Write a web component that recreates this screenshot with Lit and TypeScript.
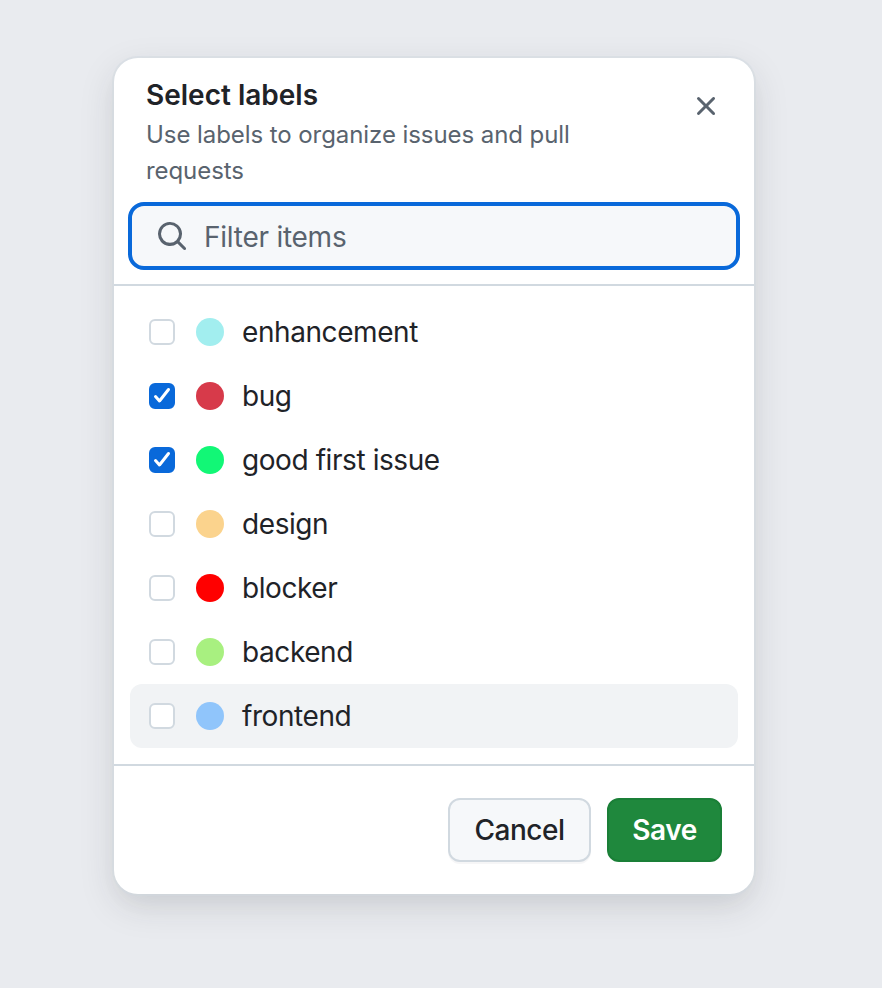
import { LitElement, html, css } from "lit";
import { customElement } from "lit/decorators.js";

const LABELS = [
  { name: "enhancement", color: "#a2eeef", checked: false, hover: false },
  { name: "bug", color: "#d73a4a", checked: true, hover: false },
  { name: "good first issue", color: "#12f776", checked: true, hover: false },
  { name: "design", color: "#fbd38d", checked: false, hover: false },
  { name: "blocker", color: "#ff0000", checked: false, hover: false },
  { name: "backend", color: "#a8f080", checked: false, hover: false },
  { name: "frontend", color: "#90c5fb", checked: false, hover: true },
];

@customElement("app-root")
export class AppRoot extends LitElement {
  static styles = css`
    :host {
      display: block;
      box-sizing: border-box;
      width: 882px;
      height: 988px;
      padding: 58px 0 0 114px;
      background: #e9ebef;
      font-family: Inter, "Noto Sans", sans-serif;
      color: #1f2328;
    }
    * { box-sizing: border-box; }
    .dialog {
      width: 640px;
      height: 836px;
      background: #fff;
      border-radius: 24px;
      box-shadow: 0 0 0 2px rgba(209, 217, 224, 0.5),
        0 12px 24px -6px rgba(37, 41, 46, 0.04),
        0 12px 36px 0 rgba(37, 41, 46, 0.13);
      display: flex;
      flex-direction: column;
    }
    .header {
      display: flex;
      justify-content: space-between;
      padding: 19px 32px 0;
    }
    .titles { width: 448px; }
    .title {
      font-size: 28px;
      font-weight: 600;
      line-height: 36px;
    }
    .sub {
      font-size: 24px;
      line-height: 36px;
      color: #59636e;
      margin-top: 4px;
      letter-spacing: -0.07px;
    }
    .close {
      flex: none;
      width: 32px;
      height: 32px;
      margin-top: 13px;
      color: #59636e;
      display: block;
    }
    .close svg, .search svg { display: block; fill: currentColor; }
    .search {
      margin: 13px 14px 0;
      height: 68px;
      border: 4px solid #0969da;
      border-radius: 16px;
      background: #f6f8fa;
      display: flex;
      align-items: center;
      gap: 16px;
      padding-left: 24px;
      font-size: 28px;
      letter-spacing: -0.25px;
      color: #59636e;
    }
    .search span { padding-top: 2px; }
    .rule { height: 2px; background: #d1d9e0; flex: none; }
    .rule.top { margin-top: 14px; }
    .list {
      padding: 14px 16px 16px;
      display: flex;
      flex-direction: column;
    }
    .row {
      height: 64px;
      display: flex;
      align-items: center;
      padding-left: 19px;
      border-radius: 12px;
      font-size: 28px;
      letter-spacing: -0.42px;
    }
    .row.hover { background: #f1f3f5; }
    .box {
      width: 26px;
      height: 26px;
      flex: none;
      border: 2px solid #d1d9e0;
      border-radius: 6px;
      background: #fff;
      margin-right: 21px;
    }
    .box.on {
      background: #0969da;
      border-color: #0969da;
      display: flex;
      align-items: center;
      justify-content: center;
    }
    .box svg { display: block; }
    .dot {
      width: 28px;
      height: 28px;
      flex: none;
      border-radius: 50%;
      margin-right: 18px;
    }
    .footer {
      display: flex;
      justify-content: flex-end;
      gap: 16px;
      padding: 32px 32px;
    }
    .btn {
      height: 64px;
      border-radius: 12px;
      font: 500 28px Inter, "Noto Sans", sans-serif;
      letter-spacing: -0.45px;
      display: flex;
      align-items: center;
      justify-content: center;
    }
    .cancel {
      width: 143px;
      background: #f6f8fa;
      border: 2px solid #d1d9e0;
      color: #1f2328;
      box-shadow: 0 2px 0 rgba(31, 35, 40, 0.04);
    }
    .save {
      width: 115px;
      background: #1f883d;
      border: 2px solid #1a7f37;
      color: #fff;
      font-weight: 600;
    }
  `;

  render() {
    return html`
      <div class="dialog">
        <div class="header">
          <div class="titles">
            <div class="title">Select labels</div>
            <div class="sub">Use labels to organize issues and pull requests</div>
          </div>
          <div class="close">
            <svg width="32" height="32" viewBox="0 0 16 16"><path d="M3.72 3.72a.75.75 0 0 1 1.06 0L8 6.94l3.22-3.22a.749.749 0 0 1 1.275.326.749.749 0 0 1-.215.734L9.06 8l3.22 3.22a.749.749 0 0 1-.326 1.275.749.749 0 0 1-.734-.215L8 9.06l-3.22 3.22a.751.751 0 0 1-1.042-.018.751.751 0 0 1-.018-1.042L6.94 8 3.72 4.78a.75.75 0 0 1 0-1.06Z"></path></svg>
          </div>
        </div>
        <div class="search">
          <svg width="32" height="32" viewBox="0 0 16 16"><path d="M10.68 11.74a6 6 0 0 1-7.922-8.982 6 6 0 0 1 8.982 7.922l3.04 3.04a.749.749 0 0 1-.326 1.275.749.749 0 0 1-.734-.215ZM11.5 7a4.499 4.499 0 1 0-8.997 0A4.499 4.499 0 0 0 11.5 7Z"></path></svg>
          <span>Filter items</span>
        </div>
        <div class="rule top"></div>
        <div class="list">
          ${LABELS.map(
            (l) => html`
              <div class="row ${l.hover ? "hover" : ""}">
                <div class="box ${l.checked ? "on" : ""}">
                  ${l.checked
                    ? html`<svg width="18" height="18" viewBox="0 0 18 18"><path d="M2.5 9.5 L6.5 14 L15.5 2.5" fill="none" stroke="#fff" stroke-width="3" stroke-linecap="round" stroke-linejoin="round"></path></svg>`
                    : ""}
                </div>
                <div class="dot" style="background:${l.color}"></div>
                <span>${l.name}</span>
              </div>
            `
          )}
        </div>
        <div class="rule"></div>
        <div class="footer">
          <div class="btn cancel">Cancel</div>
          <div class="btn save">Save</div>
        </div>
      </div>
    `;
  }
}
